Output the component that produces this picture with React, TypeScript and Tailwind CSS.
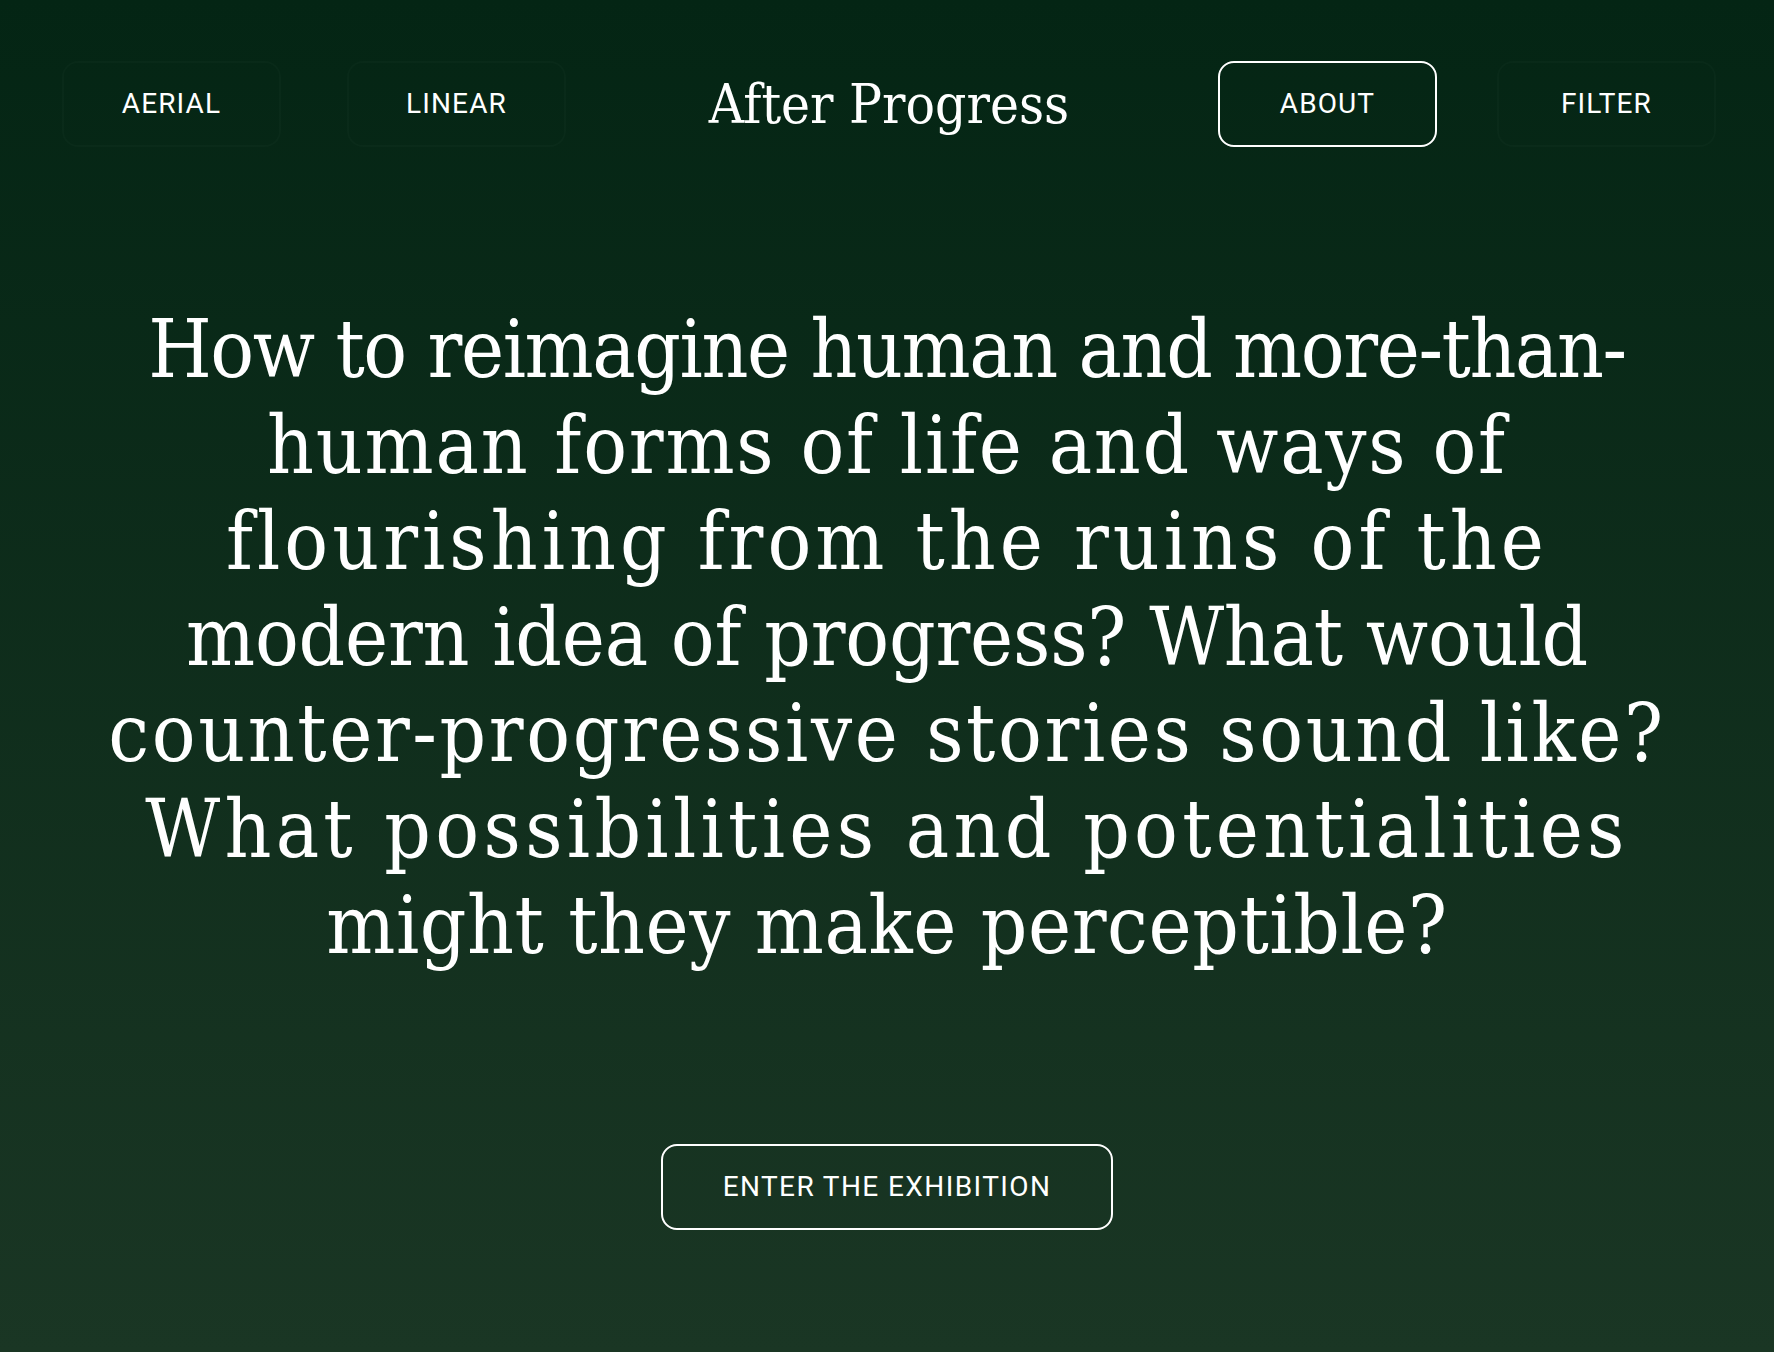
const lines = [
  { text: "How to reimagine human and more-than-", cls: "tracking-[-1.4px]" },
  { text: "human forms of life and ways of", cls: "tracking-[1.8px]" },
  { text: "flourishing from the ruins of the", cls: "tracking-[4px]" },
  { text: "modern idea of progress? What would", cls: "tracking-[-0.2px]" },
  { text: "counter-progressive stories sound like?", cls: "tracking-[2.6px]" },
  { text: "What possibilities and potentialities", cls: "tracking-[4.3px]" },
  { text: "might they make perceptible?", cls: "tracking-[0.6px]" },
];

function NavButton({ label, active = false }: { label: string; active?: boolean }) {
  return (
    <button
      className={
        active
          ? "flex h-[86px] w-[219px] items-center justify-center rounded-[16px] border-2 border-white text-[28px] tracking-[0.04em] text-white font-['Roboto',sans-serif]"
          : "flex h-[86px] w-[219px] items-center justify-center rounded-[16px] border-2 border-white/[0.02] text-[28px] tracking-[0.04em] text-white font-['Roboto',sans-serif]"
      }
    >
      {label}
    </button>
  );
}

export default function App() {
  return (
    <div className="flex min-h-screen w-full flex-col items-center bg-gradient-to-b from-[#042514] to-[#1a3624] text-white">
      <header className="grid w-full grid-cols-3 items-center pl-[62px] pr-[58px] pt-[61px]">
        <div className="flex items-center gap-[66px]">
          <NavButton label="AERIAL" />
          <NavButton label="LINEAR" />
        </div>
        <h1 className="text-center text-[54.5px] leading-none text-white font-['DejaVu_Serif_Condensed','DejaVu_Serif',serif]">
          After Progress
        </h1>
        <div className="flex items-center justify-end gap-[60px]">
          <NavButton label="ABOUT" active />
          <NavButton label="FILTER" />
        </div>
      </header>

      <main className="mt-[154px] flex flex-col items-center">
        <p className="text-center text-[81px] leading-[96px] text-white font-['DejaVu_Serif_Condensed','DejaVu_Serif',serif]">
          {lines.map((l) => (
            <span key={l.text} className={"block whitespace-nowrap " + l.cls}>
              {l.text}
            </span>
          ))}
        </p>
      </main>

      <button className="mt-[171px] flex h-[86px] w-[452px] items-center justify-center rounded-[16px] border-2 border-white text-[28px] tracking-[0.05em] text-white font-['Roboto',sans-serif]">
        ENTER THE EXHIBITION
      </button>
    </div>
  );
}
